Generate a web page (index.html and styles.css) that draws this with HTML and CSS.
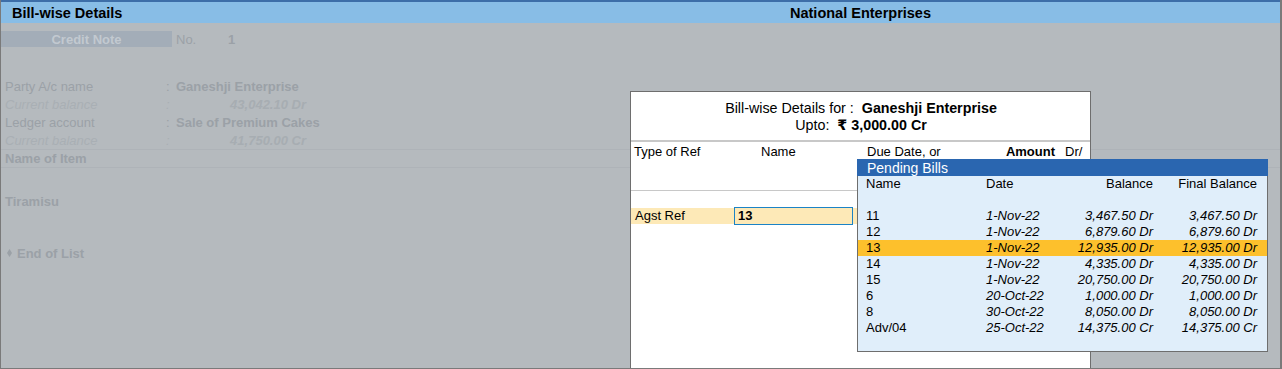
FILE: index.html
```html
<!DOCTYPE html>
<html>
<head>
<meta charset="utf-8">
<link rel="stylesheet" href="styles.css">
</head>
<body>
<div class="window">
  <header class="titlebar">
    <span class="t-left">Bill-wise Details</span>
    <span class="t-center">National Enterprises</span>
  </header>

  <section class="voucher">
    <div class="vhead">
      <span class="vtype">Credit Note</span>
      <span class="vno">No.</span>
      <span class="vnum">1</span>
    </div>
    <div class="party">
      <span class="lbl">Party A/c name</span><span class="colon">:</span><span class="val">Ganeshji Enterprise</span>
      <span class="lbl cur">Current balance</span><span class="colon cur">:</span><span class="bal">43,042.10 Dr</span>
      <span class="lbl">Ledger account</span><span class="colon">:</span><span class="val">Sale of Premium Cakes</span>
      <span class="lbl cur">Current balance</span><span class="colon cur">:</span><span class="bal">41,750.00 Cr</span>
    </div>
    <div class="items-head">Name of Item</div>
    <div class="item">Tiramisu</div>
    <div class="eol"><svg class="diamond" width="5" height="8" viewBox="0 0 5 8"><polygon points="2.5,0 5,4 2.5,8 0,4" fill="currentColor"/></svg><span>End of List</span></div>
  </section>

  <section class="dialog">
    <div class="d-title">
      <div>Bill-wise Details for :&nbsp; <b>Ganeshji Enterprise</b></div>
      <div>Upto:&nbsp; <b>₹ 3,000.00 Cr</b></div>
    </div>
    <div class="d-cols">
      <span>Type of Ref</span>
      <span>Name</span>
      <span class="c-amt">Due Date, or<b>Amount</b></span>
      <span class="c-dr">Dr/</span>
    </div>
    <div class="d-row">
      <span class="r-type">Agst Ref</span>
      <span class="r-input">13</span>
    </div>
  </section>

  <section class="pending">
    <div class="p-title">Pending Bills</div>
    <div class="p-grid p-head">
      <span>Name</span><span>Date</span><span class="r">Balance</span><span class="r">Final Balance</span>
    </div>
    <div class="p-gap"></div>
    <div class="p-grid p-row"><span>11</span><i>1-Nov-22</i><i class="r">3,467.50 Dr</i><i class="r">3,467.50 Dr</i></div>
    <div class="p-grid p-row"><span>12</span><i>1-Nov-22</i><i class="r">6,879.60 Dr</i><i class="r">6,879.60 Dr</i></div>
    <div class="p-grid p-row sel"><span>13</span><i>1-Nov-22</i><i class="r">12,935.00 Dr</i><i class="r">12,935.00 Dr</i></div>
    <div class="p-grid p-row"><span>14</span><i>1-Nov-22</i><i class="r">4,335.00 Dr</i><i class="r">4,335.00 Dr</i></div>
    <div class="p-grid p-row"><span>15</span><i>1-Nov-22</i><i class="r">20,750.00 Dr</i><i class="r">20,750.00 Dr</i></div>
    <div class="p-grid p-row"><span>6</span><i>20-Oct-22</i><i class="r">1,000.00 Dr</i><i class="r">1,000.00 Dr</i></div>
    <div class="p-grid p-row"><span>8</span><i>30-Oct-22</i><i class="r">8,050.00 Dr</i><i class="r">8,050.00 Dr</i></div>
    <div class="p-grid p-row"><span>Adv/04</span><i>25-Oct-22</i><i class="r">14,375.00 Cr</i><i class="r">14,375.00 Cr</i></div>
  </section>
</div>
</body>
</html>
```

FILE: styles.css
```css
* { box-sizing: border-box; }
html, body { margin: 0; padding: 0; }
body {
  font-family: "Liberation Sans", Arial, "DejaVu Sans", sans-serif;
  font-size: 13px;
  color: #000;
  background: #b5babe;
}
.window {
  position: relative;
  width: 1282px;
  height: 369px;
  overflow: hidden;
  background: #b5babe;
  border-left: 1px solid #7a7a7a;
  border-right: 2px solid #7a7a7a;
  border-bottom: 1px solid #7a7a7a;
}
.titlebar {
  display: flex;
  align-items: center;
  height: 23px;
  border-top: 2px solid #3d6ea8;
  background: #88bde6;
  font-weight: bold;
  font-size: 14.5px;
  line-height: 20px;
}
.t-left { width: 438px; padding-left: 11px; }
.t-center { flex: 1; text-align: center; padding-left: 2px; }

/* dimmed voucher */
.voucher { color: #9ba1a7; }
.vhead {
  display: flex;
  margin-top: 8px;
  height: 16px;
  line-height: 17px;
}
.vtype {
  width: 171px;
  background: #a3adb8;
  color: #c2c9d0;
  font-weight: bold;
  text-align: center;
}
.vno { width: 52px; margin-left: 4px; }
.vnum { font-weight: bold; }
.party {
  display: grid;
  grid-template-columns: 161px 10px auto;
  margin-top: 31px;
  padding-left: 4px;
  line-height: 18px;
  white-space: nowrap;
}
.val { font-weight: bold; }
.cur { font-style: italic; color: #a9afb4; }
.bal {
  width: 130px;
  text-align: right;
  font-style: italic;
  font-weight: bold;
  color: #a7adb2;
}
.items-head {
  border-top: 1px solid #aeb3b8;
  border-bottom: 1px solid #aeb3b8;
  height: 19px;
  line-height: 17px;
  padding-left: 4px;
  font-weight: bold;
  margin-top: -1px;
}
.item {
  margin-top: 25px;
  line-height: 18px;
  padding-left: 4px;
  font-weight: bold;
}
.eol {
  display: flex;
  align-items: center;
  margin-top: 33px;
  height: 18px;
  padding-left: 6px;
  font-weight: bold;
}
.diamond { margin-right: 5px; margin-top: -1px; }

/* dialog */
.dialog {
  position: absolute;
  left: 629px;
  top: 91px;
  width: 461px;
  height: 290px;
  background: #fff;
  border: 1px solid #6e6e6e;
}
.d-title {
  padding-top: 8px;
  height: 50px;
  line-height: 17px;
  font-size: 14.3px;
  text-align: center;
  border-bottom: 2px solid #c8c8c8;
}
.d-title div { padding-left: 1px; }
.d-cols {
  display: grid;
  grid-template-columns: 127px 106px 188px auto;
  height: 49px;
  padding-left: 3px;
  padding-top: 1px;
  line-height: 17px;
  border-bottom: 1px solid #c8c8c8;
}
.c-amt { display: flex; justify-content: space-between; }
.c-dr { padding-left: 10px; }
.d-row {
  display: flex;
  margin-top: 17px;
  height: 16px;
  line-height: 16px;
  background: #fde9b7;
  padding-left: 4px;
}
.r-type { width: 99px; }
.r-input {
  width: 119px;
  height: 18px;
  margin-top: -1px;
  line-height: 16px;
  border: 1px solid #1b83c6;
  padding-left: 3px;
  font-weight: bold;
}

/* pending bills */
.pending {
  position: absolute;
  left: 856px;
  top: 159px;
  width: 411px;
  height: 193px;
  background: #e0eefa;
  border: 1px solid #6e6e6e;
  border-top: none;
}
.p-title {
  height: 17px;
  line-height: 18px;
  font-size: 14px;
  background: #2a66b0;
  color: #fff;
  margin: 0 -1px;
  padding-left: 10px;
}
.p-grid {
  display: grid;
  grid-template-columns: 120px 80px 87px 104px;
  padding: 0 9px 0 8px;
  height: 16px;
  line-height: 16px;
  white-space: nowrap;
}
.p-head { line-height: 15px; }
.p-gap { height: 16px; }
.p-row i { font-style: italic; }
.r { text-align: right; }
.sel { background: #fdc02c; }
```
